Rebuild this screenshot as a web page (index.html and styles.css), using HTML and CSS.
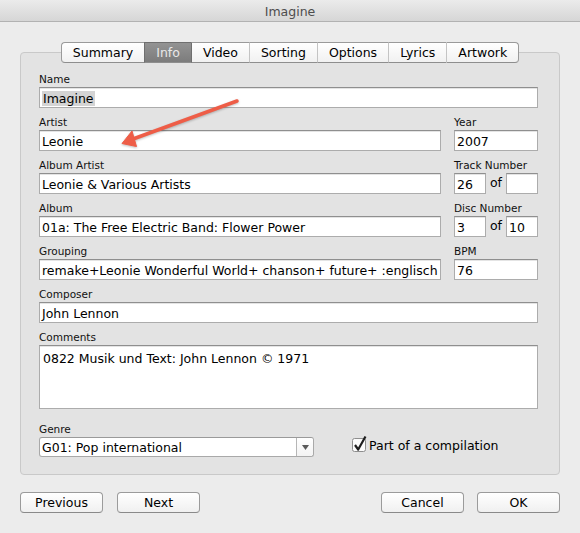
FILE: index.html
```html
<!DOCTYPE html>
<html>
<head>
<meta charset="utf-8">
<title>Imagine</title>
<link rel="stylesheet" href="styles.css">
</head>
<body>
<div class="window">
  <div class="titlebar">Imagine</div>
  <div class="content">
    <div class="tabs">
      <div class="tab">Summary</div>
      <div class="tab active">Info</div>
      <div class="tab">Video</div>
      <div class="tab">Sorting</div>
      <div class="tab">Options</div>
      <div class="tab">Lyrics</div>
      <div class="tab">Artwork</div>
    </div>
    <div class="group">
      <div class="grid">
        <div class="field span2">
          <div class="label">Name</div>
          <div class="input"><span class="sel">Imagine</span></div>
        </div>
        <div class="field">
          <div class="label">Artist</div>
          <div class="input">Leonie</div>
        </div>
        <div class="field">
          <div class="label">Year</div>
          <div class="input">2007</div>
        </div>
        <div class="field">
          <div class="label">Album Artist</div>
          <div class="input">Leonie &amp; Various Artists</div>
        </div>
        <div class="field">
          <div class="label">Track Number</div>
          <div class="pair">
            <div class="input small">26</div>
            <span class="of">of</span>
            <div class="input small"></div>
          </div>
        </div>
        <div class="field">
          <div class="label">Album</div>
          <div class="input">01a: The Free Electric Band: Flower Power</div>
        </div>
        <div class="field">
          <div class="label">Disc Number</div>
          <div class="pair">
            <div class="input small">3</div>
            <span class="of">of</span>
            <div class="input small">10</div>
          </div>
        </div>
        <div class="field">
          <div class="label">Grouping</div>
          <div class="input">remake+Leonie Wonderful World+ chanson+ future+ :englisch</div>
        </div>
        <div class="field">
          <div class="label">BPM</div>
          <div class="input">76</div>
        </div>
        <div class="field span2">
          <div class="label">Composer</div>
          <div class="input">John Lennon</div>
        </div>
        <div class="field span2">
          <div class="label">Comments</div>
          <div class="input area">0822 Musik und Text: John Lennon © 1971</div>
        </div>
        <div class="genre-row span2">
          <div class="field genre">
            <div class="label">Genre</div>
            <div class="select">
              <span class="select-text">G01: Pop international</span>
              <span class="select-btn"><svg width="7" height="5" viewBox="0 0 7 5"><path d="M0 0 L7 0 L3.5 5 Z" fill="#5a5a5a"/></svg></span>
            </div>
          </div>
          <div class="check">
            <svg class="checkbox" width="16" height="18" viewBox="0 0 16 18">
              <rect x="0.5" y="3.5" width="13" height="13" rx="2" fill="#fbfbfb" stroke="#8e8e8e"/>
              <path d="M3 10 L6.2 14.5 L13.5 1.5" fill="none" stroke="#1e1e1e" stroke-width="2.2" stroke-linejoin="round"/>
            </svg>
            <span class="check-label">Part of a compilation</span>
          </div>
        </div>
      </div>
    </div>
    <div class="buttons">
      <div class="btn-group">
        <div class="btn">Previous</div>
        <div class="btn">Next</div>
      </div>
      <div class="btn-group right">
        <div class="btn">Cancel</div>
        <div class="btn">OK</div>
      </div>
    </div>
  </div>
  <svg class="annotation" width="580" height="533" viewBox="0 0 580 533">
    <line x1="237" y1="101" x2="133" y2="139" stroke="#ee5d47" stroke-width="3.5" stroke-linecap="round"/>
    <path d="M122 143.5 L132 131 L136.5 146.5 Z" fill="#ee5d47" stroke="#ee5d47" stroke-width="1" stroke-linejoin="round"/>
  </svg>
</div>
</body>
</html>
```

FILE: styles.css
```css
* { box-sizing: border-box; }

html, body {
  margin: 0;
  padding: 0;
  background: #ececec;
}

.window {
  position: relative;
  width: 580px;
  height: 533px;
  background: #ececec;
  font-family: "DejaVu Sans", sans-serif;
  color: #000;
  overflow: hidden;
}

.titlebar {
  height: 22px;
  background: linear-gradient(#ebebeb, #d6d6d6);
  border-bottom: 1px solid #b2b2b2;
  text-align: center;
  font-size: 12.5px;
  line-height: 23px;
  color: #4d4d4d;
}

.content {
  padding: 20px 20px 0 20px;
}

.tabs {
  display: flex;
  justify-content: center;
  position: relative;
  z-index: 1;
  height: 21px;
}

.tab {
  height: 21px;
  padding: 0 11px;
  font-size: 12.5px;
  line-height: 19px;
  background: linear-gradient(#ffffff, #f1f1f1);
  border-top: 1px solid #9a9a9a;
  border-bottom: 1px solid #8e8e8e;
  border-left: 1px solid #c4c4c4;
}

.tab:first-child {
  border-left: 1px solid #9a9a9a;
  border-radius: 4px 0 0 4px;
}

.tab:last-child {
  border-right: 1px solid #9a9a9a;
  border-radius: 0 4px 4px 0;
}

.tab.active {
  background: linear-gradient(#939393, #7c7c7c);
  color: #e8e8e8;
  border-left-color: #6f6f6f;
  border-top-color: #6f6f6f;
}

.tab.active + .tab {
  border-left-color: #6f6f6f;
}

.group {
  margin-top: -11px;
  background: #e3e3e3;
  border: 1px solid #c9c9c9;
  border-radius: 4px;
  padding: 19px 21px 17px 18px;
}

.grid {
  display: grid;
  grid-template-columns: 402px 84px;
  column-gap: 13px;
  row-gap: 7px;
}

.span2 {
  grid-column: 1 / span 2;
}

.label {
  font-size: 10.5px;
  line-height: 13px;
  height: 13px;
  padding-top: 1px;
  margin-bottom: 2px;
  color: #111;
}

.input {
  height: 21px;
  background: #fff;
  border: 1px solid #acacac;
  border-top-color: #8f8f8f;
  box-shadow: inset 0 1px 0 #e4e4e4;
  padding: 2px 3px 0 2px;
  font-size: 12.5px;
  line-height: 18px;
  white-space: nowrap;
  overflow: hidden;
}

.sel {
  background: #d4d4d4;
  padding: 0 1px;
}

.input.area {
  height: 64px;
  padding: 5px 3px;
  line-height: 16px;
}

.pair {
  display: flex;
  align-items: center;
  justify-content: space-between;
}

.input.small {
  width: 32px;
}

.of {
  font-size: 12.5px;
  line-height: 16px;
  margin-top: -2px;
}

.genre-row {
  display: flex;
  align-items: flex-start;
  margin-top: 6px;
}

.genre {
  width: 275px;
}

.select {
  display: flex;
  height: 20px;
  background: #fff;
  border: 1px solid #a9a9a9;
  border-top-color: #9a9a9a;
  border-radius: 3px;
  font-size: 12.5px;
  line-height: 18px;
}

.select-text {
  flex: 1;
  padding-left: 2px;
  padding-top: 1px;
}

.select-btn {
  width: 17px;
  border-left: 1px solid #b6b6b6;
  display: flex;
  align-items: center;
  justify-content: center;
  background: linear-gradient(#ffffff, #f3f3f3);
  border-radius: 0 3px 3px 0;
}

.check {
  display: flex;
  align-items: flex-start;
  margin-left: 38px;
  margin-top: 13px;
}

.checkbox {
  display: block;
}

.check-label {
  font-size: 12.5px;
  line-height: 16px;
  margin-left: 1px;
  margin-top: 3px;
}

.buttons {
  display: flex;
  justify-content: space-between;
  margin-top: 17px;
}

.btn-group {
  display: flex;
  gap: 14px;
}

.btn-group.right {
  gap: 13px;
}

.btn {
  width: 83px;
  height: 21px;
  border: 1px solid #9b9b9b;
  border-bottom-color: #8a8a8a;
  border-radius: 4px;
  background: linear-gradient(#ffffff, #f0f0f0);
  text-align: center;
  font-size: 12.5px;
  line-height: 19px;
}

.annotation {
  position: absolute;
  left: 0;
  top: 0;
  pointer-events: none;
  filter: drop-shadow(0 1px 1px rgba(0,0,0,0.25));
}
```
